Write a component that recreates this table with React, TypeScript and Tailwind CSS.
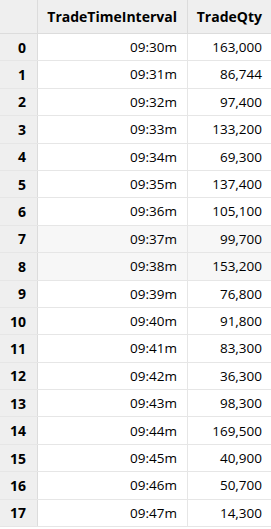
const rows: [string, string][] = [
  ["09:30m", "163,000"],
  ["09:31m", "86,744"],
  ["09:32m", "97,400"],
  ["09:33m", "133,200"],
  ["09:34m", "69,300"],
  ["09:35m", "137,400"],
  ["09:36m", "105,100"],
  ["09:37m", "99,700"],
  ["09:38m", "153,200"],
  ["09:39m", "76,800"],
  ["09:40m", "91,800"],
  ["09:41m", "83,300"],
  ["09:42m", "36,300"],
  ["09:43m", "98,300"],
  ["09:44m", "169,500"],
  ["09:45m", "40,900"],
  ["09:46m", "50,700"],
  ["09:47m", "14,300"],
];

const App = () => {
  return (
    <div className="w-[271px] h-[529px] overflow-hidden bg-white text-[13.5px] text-black font-['Open_Sans','Noto_Sans',sans-serif]">
      {/* Header */}
      <div className="flex h-[34px] border-b border-[#dcdcdc] bg-[#efefef] font-bold text-[14px]">
        <div className="w-[38px] border-r border-[#dcdcdc]" />
        <div className="w-[150px] flex items-center justify-end pr-[10px] border-r border-[#dcdcdc]">
          TradeTimeInterval
        </div>
        <div className="flex-1 flex items-center justify-end pr-[9px]">TradeQty</div>
      </div>

      {/* Body */}
      {rows.map(([time, qty], i) => (
        <div
          key={i}
          className={`flex h-[27.4px] border-b border-[#e6e6e6] ${i === 7 || i === 8 ? "bg-[#f7f7f7]" : "bg-white"}`}
        >
          <div className="w-[38px] flex items-center justify-end pr-[11px] bg-[#efefef] border-r border-[#dcdcdc] font-bold text-[14px]">
            {i}
          </div>
          <div className="w-[150px] flex items-center justify-end pr-[10px] border-r border-[#e6e6e6]">
            {time}
          </div>
          <div className="flex-1 flex items-center justify-end pr-[9px]">{qty}</div>
        </div>
      ))}
    </div>
  );
};

export default App;
